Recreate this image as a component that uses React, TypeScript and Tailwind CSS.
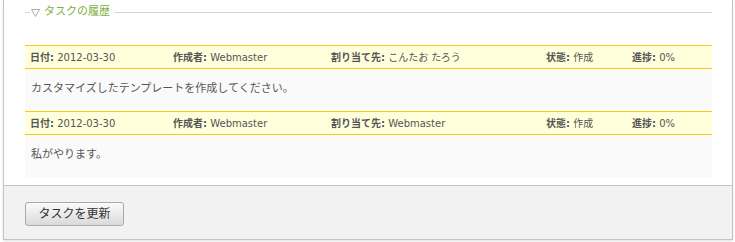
const FONT = "font-['DejaVu_Sans','Noto_Sans_CJK_JP',sans-serif]"

type Entry = {
  date: string
  author: string
  assignee: string
  status: string
  progress: string
  note: string
}

const entries: Entry[] = [
  { date: '2012-03-30', author: 'Webmaster', assignee: 'こんたお たろう', status: '作成', progress: '0%', note: 'カスタマイズしたテンプレートを作成してください。' },
  { date: '2012-03-30', author: 'Webmaster', assignee: 'Webmaster', status: '作成', progress: '0%', note: '私がやります。' },
]

function Field({ label, value, className }: { label: string; value: string; className?: string }) {
  return (
    <div className={className}>
      <span className="font-bold">{label}:</span> {value}
    </div>
  )
}

function HistoryRow({ e }: { e: Entry }) {
  return (
    <div>
      <div className="flex h-[24px] items-center border-y border-[#f7cb12] bg-[#ffffdc] pl-[5px] text-[10px] text-[#555]">
        <Field label="日付" value={e.date} className="w-[143px]" />
        <Field label="作成者" value={e.author} className="w-[158px]" />
        <Field label="割り当て先" value={e.assignee} className="w-[215px]" />
        <Field label="状態" value={e.status} className="w-[86px]" />
        <Field label="進捗" value={e.progress} className="flex-1" />
      </div>
      <div className="h-[42px] bg-[#fafafa] pl-[6px] pt-[11px] text-[11px] leading-[18px] text-[#555]">
        {e.note}
      </div>
    </div>
  )
}

export default function App() {
  return (
    <div className={`${FONT} h-[242px] w-[735px] bg-white pl-[3px] pr-[2px]`}>
      <div className="border-x border-b border-[#c4c4c4] bg-white shadow-[0_1px_2px_rgba(0,0,0,0.12)]">
        <div className="pl-[21px] pr-[20px]">
          <div className="flex h-[24px] items-center">
            <div className="h-px w-[5px] bg-[#d6d6d6]" />
            <svg width="9" height="8" viewBox="0 0 9 8" className="ml-[1px] mt-[1px]">
              <polygon points="0.5,0.5 8.5,0.5 4.5,7.5" fill="none" stroke="#aaa" strokeWidth="1" />
            </svg>
            <span className="ml-[4px] mr-[4px] text-[11px] text-[#7fb03e]">タスクの履歴</span>
            <div className="h-px flex-1 bg-[#d6d6d6]" />
          </div>
          <div className="mt-[21px] mb-[8px]">
            {entries.map((e, i) => <HistoryRow key={i} e={e} />)}
          </div>
        </div>
        <div className="border-t border-[#c4c4c4] bg-[#f2f2f2] pb-[13px] pl-[21px] pt-[15px]">
          <button className="h-[24px] w-[99px] rounded-[3px] border border-[#aaa] bg-gradient-to-b from-[#fbfbfb] to-[#dadada] text-[12px] text-[#333]">
            タスクを更新
          </button>
        </div>
      </div>
    </div>
  )
}
